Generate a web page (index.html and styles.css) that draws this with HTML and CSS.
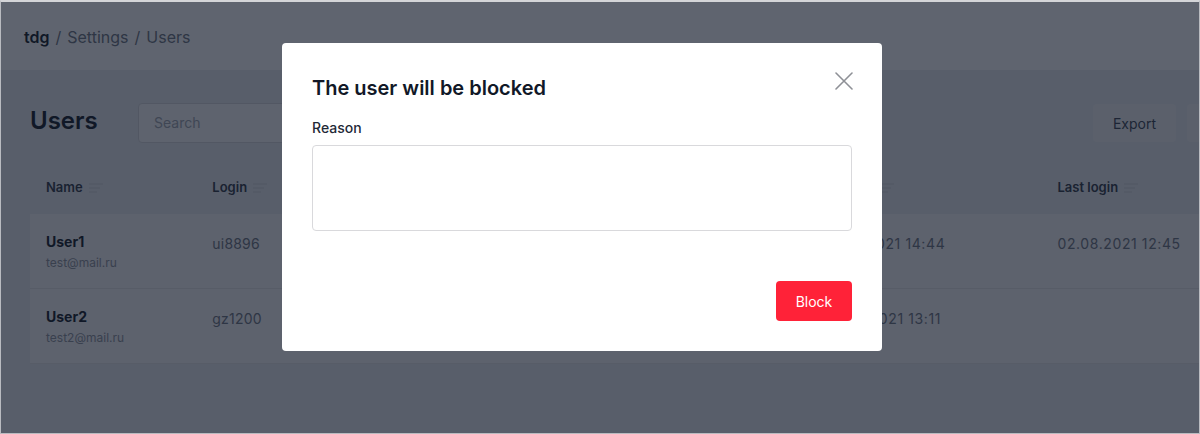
FILE: index.html
```html
<!DOCTYPE html>
<html lang="en">
<head>
<meta charset="utf-8">
<title>Users</title>
<link rel="stylesheet" href="styles.css">
</head>
<body>
<div class="frame">
  <header class="topbar">
    <nav class="crumbs"><span class="crumb-root">tdg</span><span class="sep">/</span><span>Settings</span><span class="sep">/</span><span>Users</span></nav>
  </header>
  <main class="main">
    <div class="toolbar">
      <h1 class="title">Users</h1>
      <div class="search">Search</div>
      <div class="spacer"></div>
      <button class="btn-ghost">Export</button>
      <button class="btn-ghost btn-more" aria-label="More"></button>
    </div>
    <div class="table">
      <div class="thead">
        <div class="th c-name">Name <svg class="sort" width="14" height="10" viewBox="0 0 14 10"><path d="M0 1h14M0 5h11M0 9h8" stroke="#cfd3da" stroke-width="1.2"/></svg></div>
        <div class="th c-login">Login <svg class="sort" width="14" height="10" viewBox="0 0 14 10"><path d="M0 1h14M0 5h11M0 9h8" stroke="#cfd3da" stroke-width="1.2"/></svg></div>
        <div class="th c-status">Status <svg class="sort" width="14" height="10" viewBox="0 0 14 10"><path d="M0 1h14M0 5h11M0 9h8" stroke="#cfd3da" stroke-width="1.2"/></svg></div>
        <div class="th c-created">Created <svg class="sort" width="14" height="10" viewBox="0 0 14 10"><path d="M0 1h14M0 5h11M0 9h8" stroke="#cfd3da" stroke-width="1.2"/></svg></div>
        <div class="th c-last">Last login <svg class="sort" width="14" height="10" viewBox="0 0 14 10"><path d="M0 1h14M0 5h11M0 9h8" stroke="#cfd3da" stroke-width="1.2"/></svg></div>
      </div>
      <div class="row">
        <div class="td c-name"><div class="uname">User1</div><div class="umail">test@mail.ru</div></div>
        <div class="td c-login">ui8896</div>
        <div class="td c-status">Active</div>
        <div class="td c-created">01.08.2021 14:44</div>
        <div class="td c-last">02.08.2021 12:45</div>
      </div>
      <div class="row">
        <div class="td c-name"><div class="uname">User2</div><div class="umail">test2@mail.ru</div></div>
        <div class="td c-login">gz1200</div>
        <div class="td c-status">Active</div>
        <div class="td c-created">02.08.2021 13:11</div>
        <div class="td c-last"></div>
      </div>
    </div>
  </main>

  <div class="overlay">
    <div class="modal">
      <div class="modal-head">
        <h2 class="modal-title">The user will be blocked</h2>
        <svg class="close" width="18" height="18" viewBox="0 0 18 18"><path d="M1 1L17 17M17 1L1 17" stroke="#8e9096" stroke-width="1.6" stroke-linecap="round"/></svg>
      </div>
      <label class="label">Reason</label>
      <div class="textarea"></div>
      <div class="modal-foot">
        <button class="btn-danger">Block</button>
      </div>
    </div>
  </div>
</div>
</body>
</html>
```

FILE: styles.css
```css
* { box-sizing: border-box; }
html, body { margin: 0; padding: 0; }
body {
  font-family: Inter, "Noto Sans", sans-serif;
  color: #111827;
  background: #fff;
}
.frame {
  position: relative;
  width: 1200px;
  height: 434px;
  overflow: hidden;
  border: 1px solid #b9bbc0;
  border-top: 2px solid #d4d5d8;
  background: #e8e9f0;
}
.topbar {
  height: 68px;
  background: #fdfdfe;
  display: flex;
  align-items: center;
  padding-left: 23px;
  padding-top: 2px;
}
.crumbs {
  font-size: 16px;
  color: #6b7280;
  display: flex;
  gap: 6px;
}
.crumb-root { color: #111827; font-weight: 600; }
.main {
  padding: 33px 0 0 29px;
  width: 1278px;
}
.toolbar {
  display: flex;
  align-items: center;
  height: 40px;
}
.title {
  margin: -5px 0 0;
  font-size: 24px;
  font-weight: 600;
  width: 108px;
  color: #111827;
}
.search {
  width: 330px;
  height: 40px;
  border: 1px solid #d4d6dc;
  border-radius: 4px;
  background: #fafafb;
  font-size: 14px;
  color: #9ca3af;
  padding: 10px 15px;
}
.spacer { flex: 1; }
.btn-ghost {
  font-family: inherit;
  font-size: 14px;
  color: #374151;
  background: #f0f1f4;
  border: 0;
  border-radius: 4px;
  height: 38px;
  width: 83px;
  padding: 0;
  margin-left: 11px;
}
.btn-more { width: 92px; }
.table { margin-top: 29px; }
.thead, .row {
  display: flex;
  align-items: center;
}
.thead { height: 42px; padding-bottom: 12px; }
.th {
  font-size: 13px;
  font-weight: 600;
  color: #2f3747;
  display: flex;
  align-items: center;
  gap: 6px;
  padding-left: 16px;
}
.sort { margin-top: 1px; }
.row {
  height: 75px;
  background: #f6f5f8;
  border-bottom: 1px solid #e3e4e8;
}
.td {
  font-size: 14px;
  color: #6b7280;
  padding-left: 16px;
  letter-spacing: 0.2px;
}
.c-name { width: 168px; }
.c-login { width: 200px; }
.c-status { width: 418px; }
.c-created { width: 236px; }
.c-last { width: 240px; }
.td.c-created, .td.c-last { letter-spacing: 0.6px; }
.uname { font-size: 14px; font-weight: 700; color: #111827; letter-spacing: 0; }
.umail { font-size: 12px; color: #8b919c; margin-top: 5px; letter-spacing: 0; }
.td.c-name { padding-top: 1px; }
.td.c-login, .td.c-created, .td.c-last { margin-top: -16px; }

.overlay {
  position: absolute;
  inset: 0;
  background: rgba(17, 24, 39, 0.667);
  padding: 41px 0 0 281px;
}
.modal {
  width: 600px;
  height: 308px;
  background: #fff;
  border-radius: 4px;
  padding: 29px 30px 30px 30px;
  display: flex;
  flex-direction: column;
}
.modal-head {
  display: flex;
  justify-content: space-between;
  align-items: flex-start;
  height: 36px;
}
.modal-title {
  margin: 4px 0 0;
  font-size: 20px;
  font-weight: 600;
  color: #111827;
}
.close { margin-top: 0; margin-right: -1px; }
.label {
  font-size: 14px;
  font-weight: 500;
  color: #1f2937;
  margin-top: 11px;
  margin-bottom: 9px;
}
.textarea {
  height: 86px;
  border: 1px solid #d9d9dc;
  border-radius: 4px;
}
.modal-foot {
  margin-top: auto;
  display: flex;
  justify-content: flex-end;
}
.btn-danger {
  font-family: inherit;
  font-size: 14px;
  color: #fff;
  background: #ff2238;
  border: 0;
  border-radius: 4px;
  width: 76px;
  height: 40px;
}
```
